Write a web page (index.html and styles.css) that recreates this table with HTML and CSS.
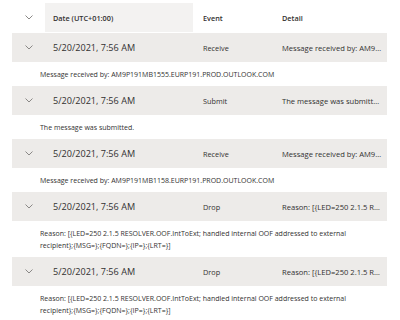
FILE: index.html
```html
<!DOCTYPE html>
<html lang="en">
<head>
    <meta charset="UTF-8">
    <meta name="viewport" content="width=device-width, initial-scale=1.0">
    <title>Message trace</title>
    <link rel="stylesheet" href="styles.css">
</head>
<body>
    <div class="trace-list">
        <div class="list-header">
            <div class="expand-cell">
                <svg class="chevron" width="8" height="5" viewBox="0 0 8 5"><path d="M0.5 0.5 L4 4 L7.5 0.5" /></svg>
            </div>
            <div class="col-date header-cell hovered">Date (UTC+01:00)</div>
            <div class="col-event header-cell">Event</div>
            <div class="col-detail header-cell">Detail</div>
        </div>

        <div class="trace-row">
            <div class="expand-cell">
                <svg class="chevron" width="8" height="5" viewBox="0 0 8 5"><path d="M0.5 0.5 L4 4 L7.5 0.5" /></svg>
            </div>
            <div class="col-date row-date">5/20/2021, 7:56 AM</div>
            <div class="col-event">Receive</div>
            <div class="col-detail">Message received by: AM9P191MB1555.EURP191.PROD.OUTLOOK.COM</div>
        </div>
        <div class="row-expanded">Message received by: AM9P191MB1555.EURP191.PROD.OUTLOOK.COM</div>

        <div class="trace-row">
            <div class="expand-cell">
                <svg class="chevron" width="8" height="5" viewBox="0 0 8 5"><path d="M0.5 0.5 L4 4 L7.5 0.5" /></svg>
            </div>
            <div class="col-date row-date">5/20/2021, 7:56 AM</div>
            <div class="col-event">Submit</div>
            <div class="col-detail">The message was submitted.</div>
        </div>
        <div class="row-expanded">The message was submitted.</div>

        <div class="trace-row">
            <div class="expand-cell">
                <svg class="chevron" width="8" height="5" viewBox="0 0 8 5"><path d="M0.5 0.5 L4 4 L7.5 0.5" /></svg>
            </div>
            <div class="col-date row-date">5/20/2021, 7:56 AM</div>
            <div class="col-event">Receive</div>
            <div class="col-detail">Message received by: AM9P191MB1158.EURP191.PROD.OUTLOOK.COM</div>
        </div>
        <div class="row-expanded">Message received by: AM9P191MB1158.EURP191.PROD.OUTLOOK.COM</div>

        <div class="trace-row">
            <div class="expand-cell">
                <svg class="chevron" width="8" height="5" viewBox="0 0 8 5"><path d="M0.5 0.5 L4 4 L7.5 0.5" /></svg>
            </div>
            <div class="col-date row-date">5/20/2021, 7:56 AM</div>
            <div class="col-event">Drop</div>
            <div class="col-detail">Reason: [{LED=250 2.1.5 RESOLVER.OOF.IntToExt; handled internal OOF addressed to external recipient};{MSG=};{FQDN=};{IP=};{LRT=}]</div>
        </div>
        <div class="row-expanded">Reason: [{LED=250 2.1.5 RESOLVER.OOF.IntToExt; handled internal OOF addressed to external recipient};{MSG=};{FQDN=};{IP=};{LRT=}]</div>

        <div class="trace-row">
            <div class="expand-cell">
                <svg class="chevron" width="8" height="5" viewBox="0 0 8 5"><path d="M0.5 0.5 L4 4 L7.5 0.5" /></svg>
            </div>
            <div class="col-date row-date">5/20/2021, 7:56 AM</div>
            <div class="col-event">Drop</div>
            <div class="col-detail">Reason: [{LED=250 2.1.5 RESOLVER.OOF.IntToExt; handled internal OOF addressed to external recipient};{MSG=};{FQDN=};{IP=};{LRT=}]</div>
        </div>
        <div class="row-expanded">Reason: [{LED=250 2.1.5 RESOLVER.OOF.IntToExt; handled internal OOF addressed to external recipient};{MSG=};{FQDN=};{IP=};{LRT=}]</div>
    </div>
</body>
</html>
```

FILE: styles.css
```css
body {
    margin: 0;
    background: white;
    font-family: "Open Sans", "Liberation Sans", sans-serif;
    color: #323130;
    overflow: hidden;
}

.trace-list {
    width: 375px;
    padding: 3px 0 0 12px;
}

.list-header,
.trace-row {
    display: flex;
    align-items: center;
    height: 29px;
}

.list-header {
    margin-bottom: 1px;
}

.trace-row {
    background-color: #edebe9;
}

.expand-cell {
    width: 33px;
    height: 100%;
    display: flex;
    align-items: center;
    justify-content: center;
    flex-shrink: 0;
}

.chevron path {
    fill: none;
    stroke: #8a8886;
    stroke-width: 1;
}

.col-date {
    width: 140px;
    padding-left: 8px;
    flex-shrink: 0;
}

.col-event {
    width: 69px;
    padding-left: 10px;
    flex-shrink: 0;
    font-size: 7.3px;
}

.col-detail {
    flex: 1;
    min-width: 0;
    padding: 0 4px 0 10px;
    font-size: 7.6px;
    white-space: nowrap;
    overflow: hidden;
    text-overflow: ellipsis;
}

.header-cell {
    height: 100%;
    display: flex;
    align-items: center;
    font-size: 7.3px;
    font-weight: 600;
}

.header-cell.hovered {
    background-color: #f3f2f1;
}

.row-date {
    font-size: 9.1px;
}

.row-expanded {
    padding: 7px 14px 5px 28px;
    font-size: 7px;
    line-height: 12px;
}
```
